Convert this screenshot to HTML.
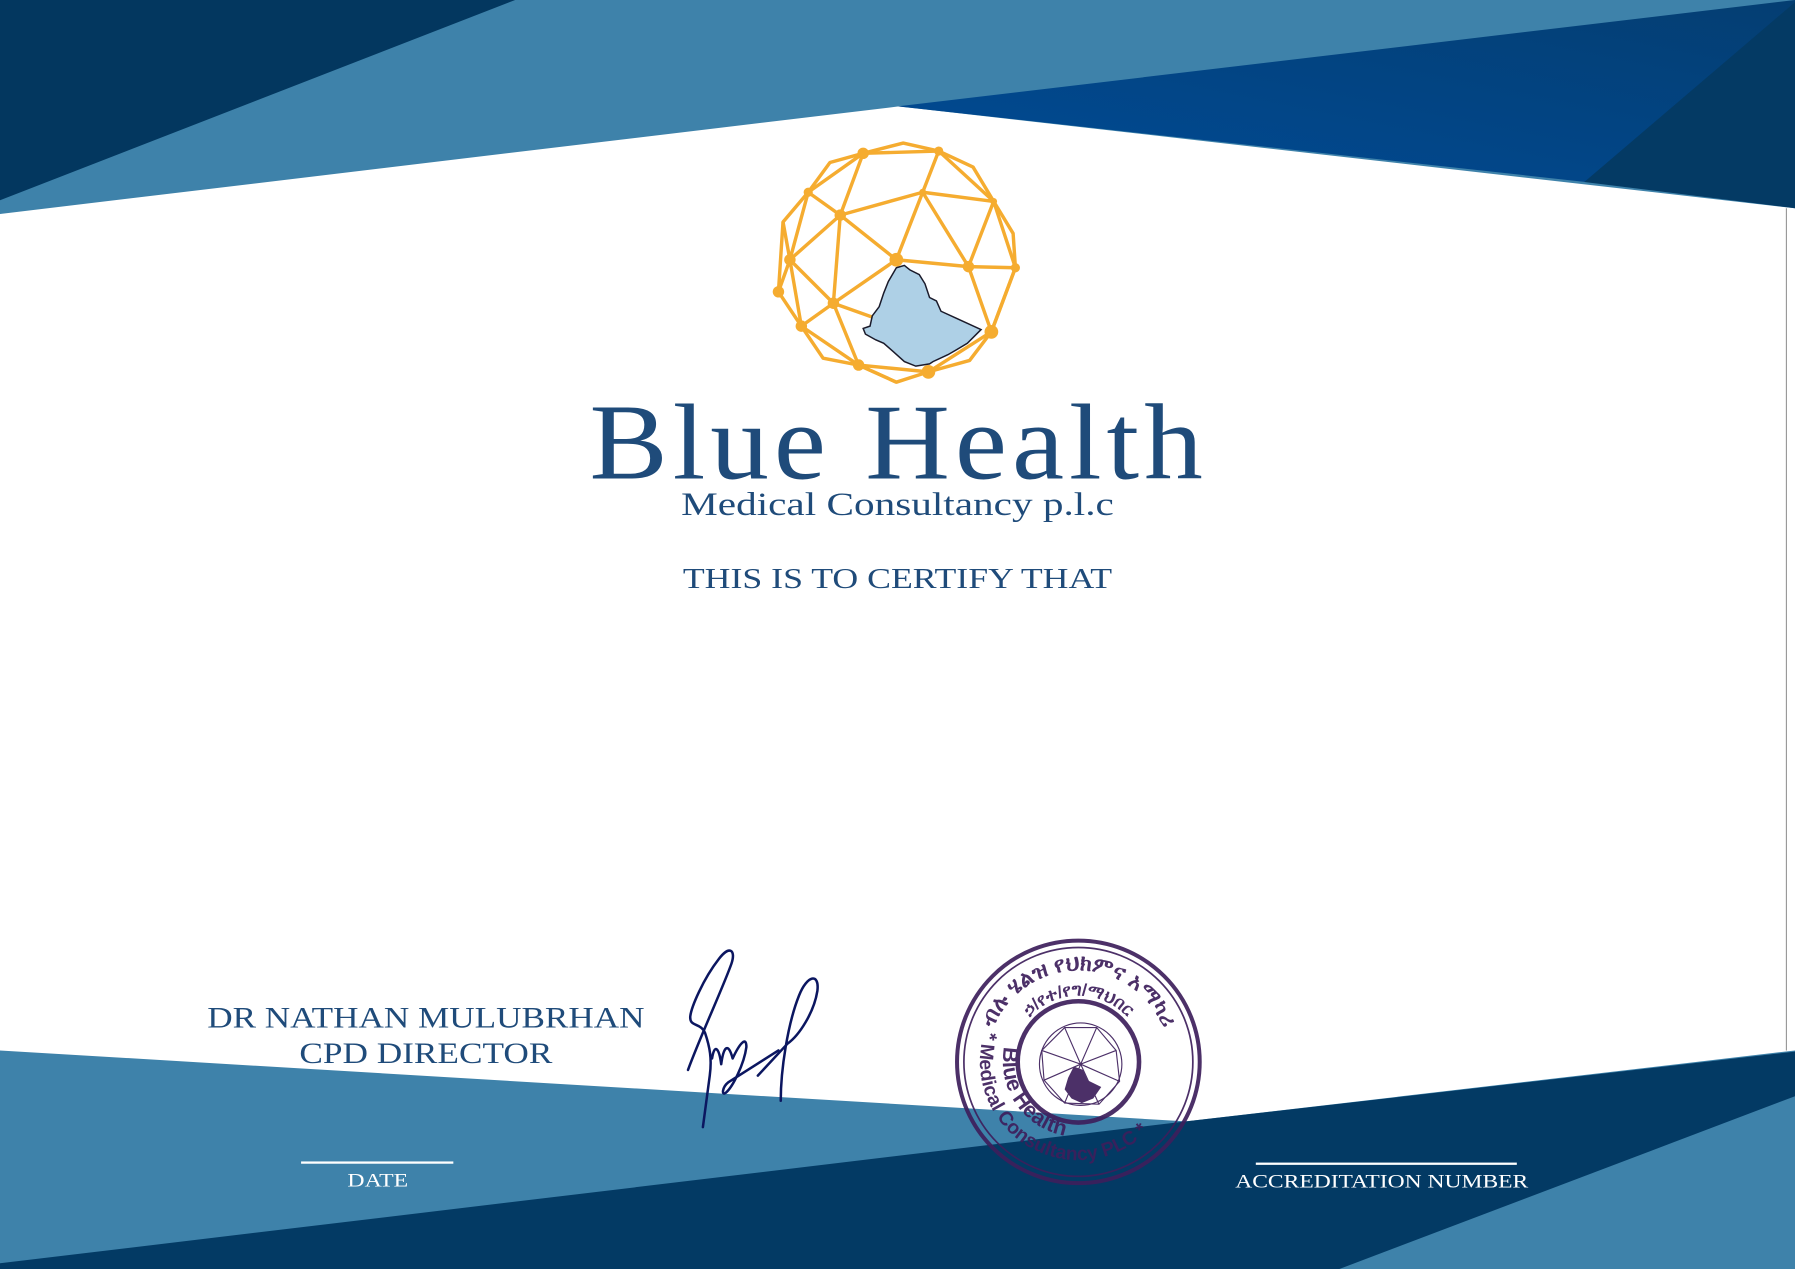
<!DOCTYPE html>
<html><head><meta charset="utf-8"><style>
html,body{margin:0;padding:0;width:1795px;height:1269px;overflow:hidden;background:#fff}
svg{display:block}
</style></head><body>
<svg width="1795" height="1269" viewBox="0 0 1568 1109" preserveAspectRatio="none" xmlns="http://www.w3.org/2000/svg">
<defs>
<linearGradient id="bg1" x1="0" y1="1" x2="1" y2="0">
<stop offset="0" stop-color="#004b96"/><stop offset="1" stop-color="#043e72"/>
</linearGradient>
</defs>
<rect width="1568" height="1109" fill="#fff"/>
<!-- top -->
<polygon points="0,0 1568,0 1568,182 785,93 0,187" fill="#3e82aa"/>
<polygon points="0,0 450,0 0,175" fill="#03375f"/>
<polygon points="784,93 1568,0 1568,5 1385,159" fill="url(#bg1)"/>
<polygon points="1384,159 1568,2 1568,182" fill="#043a64"/>
<line x1="1560.5" y1="182" x2="1560.5" y2="918" stroke="#999" stroke-width="1"/>
<!-- bottom -->
<polygon points="0,918 1036,980 1568,918 1568,1109 0,1109" fill="#3e82aa"/>
<polygon points="0,1104 1036,980 1568,919 1568,958 1170,1109 0,1109" fill="#033a64"/>

<!-- globe -->
<g stroke="#f5ac30" stroke-width="3" fill="none" stroke-linejoin="round">
<polygon points="754,134 789,125 820,132 850,146 868,176 885,204 887,234 866,290 847,315 811,325 783,334 750,319 719,313 700,285 680,255 684,194 706,168 725,142"/>
<path d="M754,134 L820,132 M754,134 L706,168 M754,134 L734,188 M820,132 L806,168 M820,132 L868,176 M706,168 L734,188 M734,188 L806,168 M806,168 L868,176 M806,168 L783,227 M806,168 L846,233 M734,188 L783,227 M734,188 L728,265 M734,188 L690,227 M706,168 L690,227 M684,194 L690,227 M690,227 L680,255 M690,227 L728,265 M690,227 L700,285 M783,227 L846,233 M783,227 L728,265 M846,233 L868,176 M846,233 L887,234 M846,233 L866,290 M868,176 L887,234 M728,265 L700,285 M728,265 L750,319 M728,265 L770,280 M700,285 L750,319 M750,319 L811,325 M811,325 L866,290 M750,319 L783,334 M866,290 L887,234"/>
</g>
<g fill="#f5ac30">
<circle cx="754" cy="134" r="5"/><circle cx="820" cy="132" r="4"/><circle cx="706" cy="168" r="4"/><circle cx="806" cy="168" r="3"/><circle cx="868" cy="176" r="3"/><circle cx="734" cy="188" r="5"/><circle cx="690" cy="227" r="5"/><circle cx="783" cy="227" r="6"/><circle cx="846" cy="233" r="5"/><circle cx="887" cy="234" r="4"/><circle cx="680" cy="255" r="5"/><circle cx="728" cy="265" r="5"/><circle cx="700" cy="285" r="5"/><circle cx="866" cy="290" r="6"/><circle cx="750" cy="319" r="5"/><circle cx="811" cy="325" r="6"/>
</g>
<path d="M783,234 L790,232 L795,236 L803,240 L808,248 L812,260 L818,263 L822,272 L835,278 L857,288 L845,300 L835,306 L828,310 L815,316 L812,318 L800,320 L790,316 L780,307 L772,300 L765,297 L756,292 L754,287 L760,285 L762,276 L768,268 L772,256 L776,246 Z" fill="#aed0e6" stroke="#1a1a2a" stroke-width="1.3"/>

<!-- titles -->
<g fill="#1f4b7a" font-family="'Liberation Serif', serif">
<text x="785" y="418" font-size="94" text-anchor="middle" textLength="540" lengthAdjust="spacingAndGlyphs" letter-spacing="4">Blue Health</text>
<text x="784" y="450" font-size="29" text-anchor="middle" textLength="378" lengthAdjust="spacingAndGlyphs">Medical Consultancy p.l.c</text>
<text x="784" y="514" font-size="25" text-anchor="middle" textLength="375" lengthAdjust="spacingAndGlyphs">THIS IS TO CERTIFY THAT</text>
<text x="372" y="898" font-size="26" text-anchor="middle" textLength="382" lengthAdjust="spacingAndGlyphs">DR NATHAN MULUBRHAN</text>
<text x="372" y="929" font-size="26" text-anchor="middle" textLength="221" lengthAdjust="spacingAndGlyphs">CPD DIRECTOR</text>
</g>
<g fill="#fff" font-family="'Liberation Serif', serif">
<rect x="263" y="1015" width="133" height="2"/>
<text x="330" y="1037" font-size="17" text-anchor="middle" textLength="53" lengthAdjust="spacingAndGlyphs">DATE</text>
<rect x="1097" y="1016" width="228" height="2"/>
<text x="1207" y="1038" font-size="17" text-anchor="middle" textLength="256" lengthAdjust="spacingAndGlyphs">ACCREDITATION NUMBER</text>
</g>

<!-- signature -->
<g fill="none" stroke="#0b1660" stroke-width="2.2" stroke-linecap="round" stroke-linejoin="round">
<path d="M601,935 C612,905 632,862 639,842 C643,830 637,826 628,838 C614,856 604,880 603,888 C602,898 612,893 616,903 C620,915 622,925 620,940 L614,985"/>
<path d="M622,925 C624,912 628,915 630,930 C632,915 636,910 640,925 C646,912 652,905 652,915 C650,930 640,950 634,955 C630,958 631,950 636,946 L680,918"/>
<path d="M682,962 C682,935 688,895 698,870 C705,852 716,850 714,866 C711,885 698,905 688,912 L662,940"/>
</g>

<!-- stamp -->
<g opacity="0.92">
<circle cx="942" cy="928" r="106" fill="none" stroke="#3d1f5c" stroke-width="3.5"/>
<circle cx="942" cy="928" r="100" fill="none" stroke="#3d1f5c" stroke-width="1.5"/>
<circle cx="942" cy="928" r="53" fill="none" stroke="#3d1f5c" stroke-width="4"/>
<path id="arcT" d="M862,928 A80,80 0 0 1 1022,928" fill="none"/>
<path id="arcT2" d="M884,928 A58,58 0 0 1 1000,928" fill="none"/>
<path id="arcB" d="M861,899 A86,86 0 1 0 1023,899" fill="none"/>
<path id="arcB2" d="M880,905 A66,66 0 1 0 1004,905" fill="none"/>
<g fill="#3d1f5c" font-family="'Liberation Sans','DejaVu Sans',sans-serif" font-weight="bold">
<text font-size="19"><textPath href="#arcT" startOffset="50%" text-anchor="middle">ብሉ ሄልዝ የህክምና አማካሪ</textPath></text>
<text font-size="15"><textPath href="#arcT2" startOffset="50%" text-anchor="middle">ኃ/የተ/የግ/ማህበር</textPath></text>
<text font-size="17"><textPath href="#arcB" startOffset="2">* Medical Consultancy PLC *</textPath></text>
<text font-size="19"><textPath href="#arcB2" startOffset="10">Blue Health</textPath></text>
</g>
<g stroke="#3d1f5c" stroke-width="1" fill="none">
<circle cx="944" cy="930" r="36"/>
<path d="M930,898 L958,898 L975,918 L978,945 L960,965 L930,964 L912,944 L910,918 Z M930,898 L944,930 L958,898 M910,918 L944,930 L975,918 M912,944 L944,930 L978,945 M930,964 L944,930 L960,965"/>
</g>
<path d="M938,932 L946,935 L950,944 L962,950 L955,960 L945,964 L936,960 L930,952 L933,942 Z" fill="#3d1f5c"/>
</g>
</svg>
</body></html>
